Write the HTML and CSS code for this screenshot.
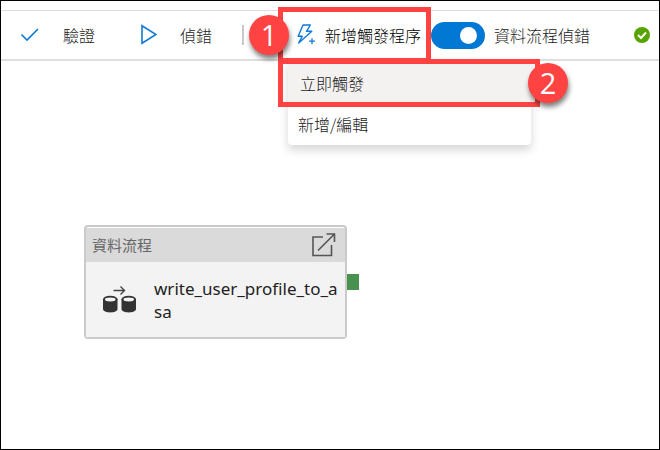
FILE: index.html
```
<!DOCTYPE html>
<html lang="zh-Hant">
<head>
<meta charset="utf-8">
<title>資料流程</title>
<link rel="stylesheet" href="styles.css">
</head>
<body>
<header class="toolbar">
  <button class="tool validate" type="button">
    <svg width="20" height="20" viewBox="0 0 20 20" aria-hidden="true"><path d="M1.500 9.500l5.500 5.500L18 4" fill="none" stroke="#0f7ad6" stroke-width="1.600"/></svg>
    <span>驗證</span>
  </button>
  <button class="tool debug" type="button">
    <svg width="18" height="22" viewBox="0 0 18 22" aria-hidden="true"><path d="M3 1.700v17.600L17 10.500z" fill="none" stroke="#0f7ad6" stroke-width="1.600"/></svg>
    <span>偵錯</span>
  </button>
  <span class="divider"></span>
  <div class="trigger">
    <button class="tool trigger-button" type="button">
      <svg width="20" height="22" viewBox="0 0 20 22" aria-hidden="true"><g fill="none" stroke="#0f7ad6" stroke-width="1.400"><path d="M7 1h7.300L10.500 7.300h5.300L2.700 19l3.600-6.800H2.200z" stroke-linejoin="round"/><path d="M16 14.200v6M13 17.200h6" stroke-width="1.300"/></g></svg>
      <span>新增觸發程序</span>
    </button>
    <div class="menu">
      <button class="menu-item selected" type="button">立即觸發</button>
      <button class="menu-item" type="button">新增/編輯</button>
      <span class="outline"></span>
      <span class="badge badge-two">2</span>
    </div>
    <span class="outline"></span>
    <span class="badge badge-one">1</span>
  </div>
  <label class="debug-switch">
    <input class="switch" type="checkbox" role="switch" checked>
    <span>資料流程偵錯</span>
  </label>
  <svg class="status" width="16" height="16" viewBox="0 0 16 16" aria-hidden="true"><circle cx="8" cy="8" r="8" fill="#57a300"/><path d="M4 8l3 3 5-5.500" fill="none" stroke="#fff" stroke-width="2"/></svg>
</header>
<main class="canvas">
  <article class="node">
    <div class="node-head">
      <span>資料流程</span>
      <button class="open" type="button" aria-label="開啟">
        <svg width="26" height="26" viewBox="0 0 26 26" aria-hidden="true"><path d="M12 5H2v18.500h18.500V13M7 18.500L23.500 2M15.500 2h8v8" fill="none" stroke="#555" stroke-width="1.600"/></svg>
      </button>
    </div>
    <div class="node-body">
      <svg width="34" height="28" viewBox="0 0 34 28" aria-hidden="true"><g fill="#333"><path d="M0 13v10c0 4.500 14.500 4.500 14.500 0V13z"/><path d="M18.500 13v10c0 4.500 14.500 4.500 14.500 0V13z"/><ellipse cx="7.250" cy="13.300" rx="7.250" ry="3.500"/><ellipse cx="25.750" cy="13.300" rx="7.250" ry="3.500"/></g><g fill="#f3f3f3"><ellipse cx="7.250" cy="13.500" rx="5.300" ry="1.900"/><ellipse cx="25.750" cy="13.500" rx="5.300" ry="1.900"/></g><path d="M10.500 4.500h11M17.500 0.500l4 4-4 4" fill="none" stroke="#444" stroke-width="1.400"/></svg>
      <span class="node-title">write_user_profile_to_asa</span>
    </div>
    <span class="port"></span>
  </article>
</main>
</body>
</html>
```
FILE: styles.css
```
* { box-sizing: border-box; }

body {
  margin: 0;
  min-height: 100vh;
  padding-top: 9px;
  border: 1px solid #000;
  background: #fff;
  color: #1c1b1a;
  font-family: "Noto Sans", "Noto Sans CJK TC", sans-serif;
  font-size: 16px;
  line-height: 24px;
}

button {
  padding: 0;
  border: 0;
  background: none;
  color: inherit;
  font: inherit;
  text-align: left;
}

svg { display: block; flex: none; }

.toolbar {
  position: relative;
  z-index: 1;
  display: flex;
  align-items: center;
  height: 51px;
  padding: 0 9px 0 19px;
  border-top: 1px solid #dedede;
  border-bottom: 2px solid #dedede;
  font-family: "Noto Sans CJK TC", sans-serif;
  font-weight: 300;
  white-space: nowrap;
}

.tool {
  display: flex;
  align-items: center;
  gap: 23px;
}

.debug { margin-left: 44px; }

.divider {
  width: 2px;
  height: 20px;
  margin-left: 30px;
  background: #c8c8c8;
}

.trigger {
  position: relative;
  margin-left: 34px;
  padding: 11px 10px 11px 18px;
}

.trigger-button {
  gap: 9px;
  color: #000;
}

.outline {
  position: absolute;
  inset: -5px 0;
  border: 5px solid #ff4343;
  pointer-events: none;
}

.badge {
  position: absolute;
  width: 40px;
  height: 40px;
  border-radius: 50%;
  background: #ff4343;
  box-shadow: 1px 4px 5px rgba(0, 0, 0, 0.5);
  color: #fff;
  font: 29px/40px "Open Sans", sans-serif;
  text-align: center;
}

.badge-one { top: 3px; left: -29px; }
.badge-two { top: 4px; right: -37px; }

.menu {
  position: absolute;
  top: 47px;
  left: 10px;
  width: 243px;
  padding-top: 4px;
  border-radius: 4px;
  background: #fff;
  box-shadow: 0 5px 10px rgba(0, 0, 0, 0.16);
}

.menu .outline {
  inset: 0 -9px auto -10px;
  height: 48px;
}

.menu-item {
  display: block;
  width: 100%;
  height: 43px;
  padding: 0 10px;
}

.menu-item.selected {
  height: 39px;
  padding-left: 12px;
  background: #f3f2f1;
}

.debug-switch {
  display: flex;
  align-items: center;
  gap: 9px;
}

.switch {
  display: flex;
  align-items: center;
  justify-content: flex-end;
  width: 54px;
  height: 27px;
  margin: 0;
  padding: 0 8px;
  border-radius: 14px;
  background: #0078d4;
  appearance: none;
}

.switch::before {
  content: "";
  width: 17px;
  height: 17px;
  border-radius: 50%;
  background: #fff;
}

.switch:not(:checked) {
  justify-content: flex-start;
  background: #8a8886;
}

.status { margin-left: auto; }

.canvas {
  position: relative;
  padding: 164px 0 0 83px;
}

.node {
  position: relative;
  width: 263px;
  padding-top: 1px;
  border: 2px solid #cacaca;
  border-radius: 4px;
  background: #fff;
}

.node-head {
  display: flex;
  align-items: center;
  justify-content: space-between;
  height: 34px;
  padding: 0 8px 0 6px;
  background: #dadada;
  color: #666;
  font-size: 15px;
}

.node-body {
  display: flex;
  align-items: center;
  gap: 17px;
  height: 75px;
  padding-left: 17px;
  background: #f3f3f3;
}

.node-title {
  flex: 1;
  color: #222;
  font-family: "Noto Sans", sans-serif;
  font-size: 17px;
  line-height: 23px;
  word-break: break-all;
}

.port {
  position: absolute;
  top: 47px;
  right: -14px;
  width: 12px;
  height: 16px;
  background: #48914f;
}
```
